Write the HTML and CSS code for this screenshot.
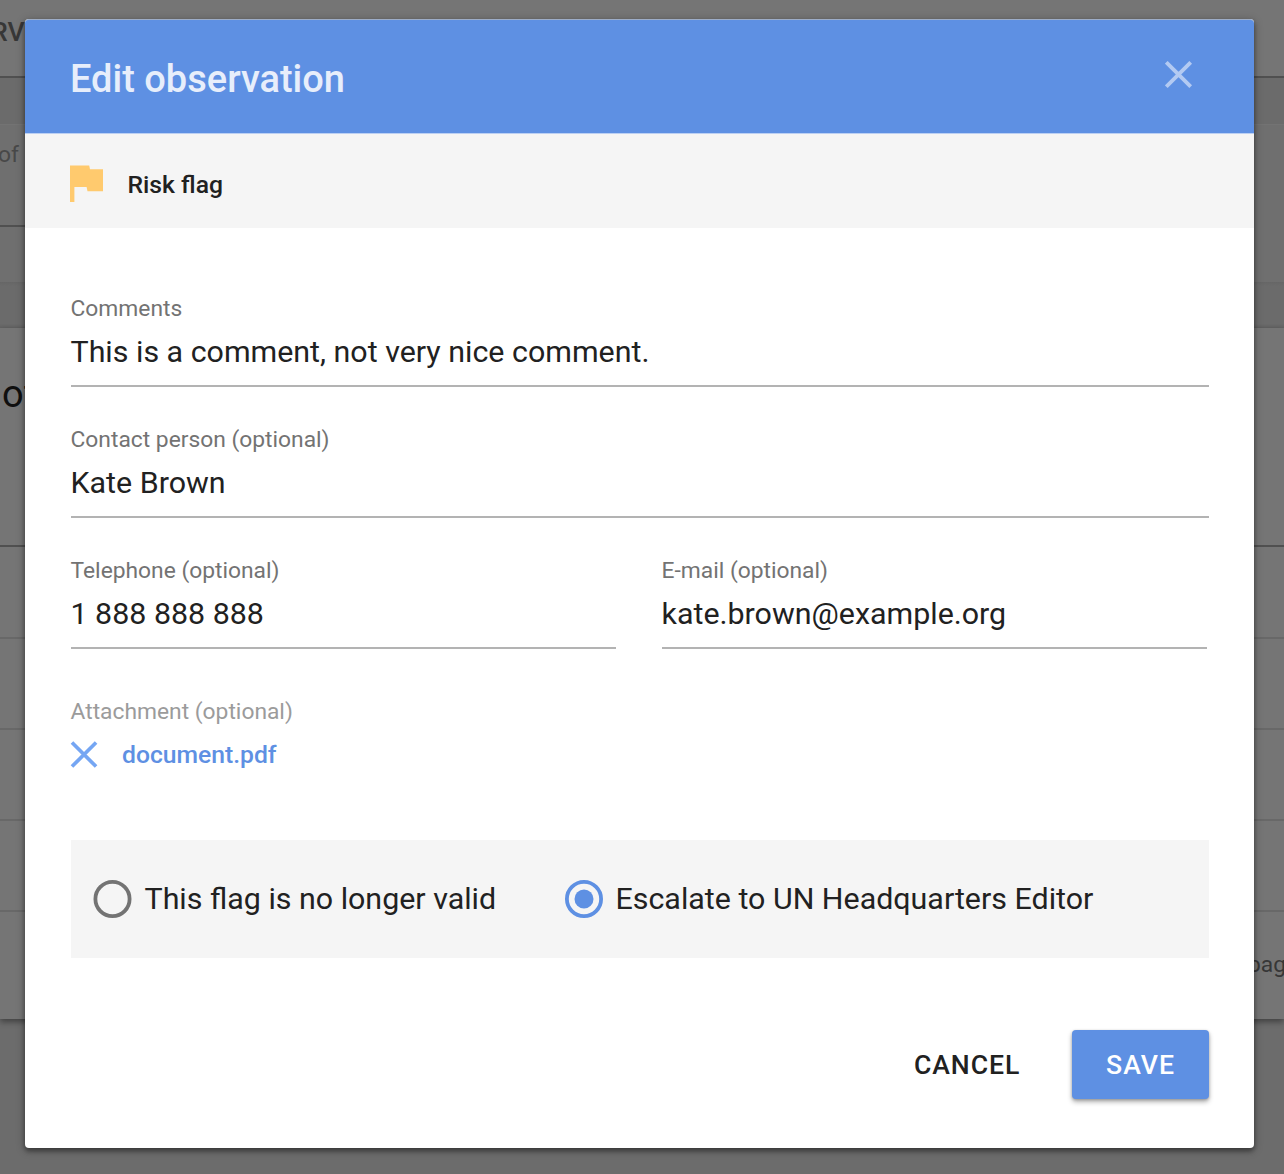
FILE: index.html
```html
<!DOCTYPE html>
<html lang="en">
<head>
<meta charset="utf-8">
<title>Edit observation</title>
<link rel="stylesheet" href="styles.css">
</head>
<body>
<div class="page" aria-hidden="true">
  <div class="page-tabs"><span class="tab-label">RV</span></div>
  <div class="page-gap"></div>
  <div class="page-filters"><div class="filter-field"><span>of</span></div></div>
  <div class="page-gap page-gap-lower"></div>
  <div class="page-table">
    <div class="table-head"><span class="table-title">of</span></div>
    <div class="table-row"></div>
    <div class="table-row"></div>
    <div class="table-row"></div>
    <div class="table-row"></div>
    <div class="table-foot"><span>pag</span></div>
  </div>
</div>

<div class="dialog" role="dialog" aria-labelledby="dialog-title">
  <header class="dialog-header">
    <h1 class="dialog-title" id="dialog-title">Edit observation</h1>
    <svg class="close-icon" viewBox="0 0 28 28"><path d="M1.3 1.3 25.7 25.7M25.7 1.3 1.3 25.7"/></svg>
  </header>
  <div class="flag-bar">
    <svg class="flag-icon" viewBox="0 0 33 37"><path d="M20 4.2 19.2.5H0V37H4.4V22H16.6L17.5 26.3H33V4.2Z"/></svg>
    <span class="flag-name">Risk flag</span>
  </div>
  <main class="dialog-body">
    <div class="field">
      <label class="field-label">Comments</label>
      <div class="field-value">This is a comment, not very nice comment.</div>
    </div>
    <div class="field">
      <label class="field-label">Contact person (optional)</label>
      <div class="field-value">Kate Brown</div>
    </div>
    <div class="field-pair">
      <div class="field">
        <label class="field-label">Telephone (optional)</label>
        <div class="field-value">1 888 888 888</div>
      </div>
      <div class="field">
        <label class="field-label">E-mail (optional)</label>
        <div class="field-value">kate.brown@example.org</div>
      </div>
    </div>
    <div class="attachment">
      <div class="field-label attachment-label">Attachment (optional)</div>
      <div class="attachment-file">
        <svg class="remove-icon" viewBox="0 0 28 28"><path d="M1 1.5 26 26.5M26 1.5 1 26.5"/></svg>
        <span class="file-name">document.pdf</span>
      </div>
    </div>
    <div class="options">
      <div class="option option-invalid">
        <svg class="radio" viewBox="0 0 38 38"><circle cx="18.5" cy="19" r="17.1"/></svg>
        <span>This flag is no longer valid</span>
      </div>
      <div class="option">
        <svg class="radio radio-checked" viewBox="0 0 38 38"><circle cx="19" cy="19" r="17.1"/><circle class="radio-dot" cx="19" cy="19" r="9.5"/></svg>
        <span>Escalate to UN Headquarters Editor</span>
      </div>
    </div>
  </main>
  <footer class="dialog-actions">
    <button class="button button-cancel">CANCEL</button>
    <button class="button button-save">SAVE</button>
  </footer>
</div>
</body>
</html>
```
FILE: styles.css
```css
* { box-sizing: border-box; }

body {
  margin: 0;
  width: 1284px;
  height: 1174px;
  overflow: hidden;
  position: relative;
  background: #6c6c6c;
  font-family: Roboto, sans-serif;
  color: #212121;
}

svg { display: block; flex: none; }

/* Dimmed page behind the dialog */
.page { display: flex; flex-direction: column; }
.page-tabs {
  height: 78px;
  padding-top: 16px;
  background: #757575;
  border-bottom: 2px solid #505050;
}
.tab-label {
  display: block;
  margin-left: -9px;
  font-size: 26.6px;
  line-height: 32px;
  font-weight: 500;
  color: #373737;
}
.page-gap { height: 46px; background: #6b6b6b; }
.page-filters {
  height: 158px;
  background: #6f6f6f;
  border-top: 1px solid #737373;
}
.filter-field {
  width: 600px;
  height: 102px;
  padding-top: 15px;
  font-size: 22.8px;
  line-height: 30px;
  color: #484848;
  border-bottom: 2px solid #505050;
}
.filter-field span { margin-left: -2px; }
.page-gap-lower {
  background: linear-gradient(#666, #6b6b6b 4px, #6b6b6b 42px, #636363);
}
.page-table {
  height: 690.5px;
  background: #757575;
  box-shadow: 0 3px 6px rgba(0, 0, 0, .4);
}
.table-head {
  height: 219.4px;
  padding: 41px 0 0 2px;
  border-bottom: 2px solid #505050;
}
.table-title {
  display: block;
  font-size: 38px;
  line-height: 50px;
  letter-spacing: -.5px;
  color: #0f0f0f;
}
.table-row { height: 91.2px; border-bottom: 2px solid #686868; }
.table-foot {
  padding: 38px 0 0 1248px;
  font-size: 22.8px;
  line-height: 30px;
  color: #373737;
}

/* Dialog */
.dialog {
  position: absolute;
  left: 25px;
  top: 19px;
  width: 1229px;
  height: 1129px;
  display: flex;
  flex-direction: column;
  background: #fff;
  border-radius: 4px;
  box-shadow: 0 4px 4px rgba(0, 0, 0, .16), 0 2px 10px rgba(0, 0, 0, .3), 0 2px 4px rgba(0, 0, 0, .2);
}
.dialog-header {
  height: 115px;
  padding: 4px 61.5px 0 45px;
  display: flex;
  justify-content: space-between;
  align-items: center;
  background: #5e90e3;
  border-top: 1px solid #9dadc8;
  border-bottom: 1px solid #bcd0f3;
  border-radius: 4px 4px 0 0;
}
.dialog-title {
  margin: 0;
  padding-top: 1px;
  font-size: 38px;
  line-height: 46px;
  font-weight: 500;
  color: #e7eefb;
}
.close-icon { width: 28px; height: 28px; margin-top: -8px; }
.close-icon path { stroke: #b3caf2; stroke-width: 3.8; }
.flag-bar {
  height: 94px;
  padding: 5px 45px 0;
  display: flex;
  align-items: center;
  gap: 24.5px;
  background: #f5f5f5;
}
.flag-icon { width: 33px; height: 37px; }
.flag-icon path { fill: #ffca6e; }
.flag-name { font-size: 24.7px; line-height: 32px; font-weight: 500; padding-top: 2px; }

.dialog-body { padding: 66px 45px 0 45.5px; }
.field { height: 131px; }
.field-label {
  display: block;
  font-size: 22.8px;
  line-height: 30px;
  color: #737373;
}
.field-value {
  height: 63px;
  padding-top: 9px;
  font-size: 30.4px;
  line-height: 38px;
  border-bottom: 2px solid #b3b3b3;
}
.field-pair {
  display: grid;
  grid-template-columns: 545px 545px;
  column-gap: 46px;
}
.attachment { height: 153px; padding-top: 10px; }
.attachment-label { color: #9b9b9b; }
.attachment-file {
  height: 54px;
  display: flex;
  align-items: center;
  gap: 24.5px;
}
.remove-icon { width: 27px; height: 27px; overflow: visible; }
.remove-icon path { stroke: #75a6f3; stroke-width: 3.8; }
.file-name { font-size: 24.7px; font-weight: 500; color: #5e90e3; }

.options {
  height: 118px;
  padding-left: 23px;
  display: flex;
  align-items: center;
  background: #f5f5f5;
  font-size: 30.4px;
  line-height: 38px;
}
.option { display: flex; align-items: center; gap: 13px; }
.option-invalid { width: 471px; }
.radio {
  width: 38px;
  height: 38px;
  overflow: visible;
  fill: none;
  stroke: #737373;
  stroke-width: 3.8;
}
.radio-checked { stroke: #5e90e3; }
.radio-dot { fill: #5e90e3; stroke: none; }

.dialog-actions {
  display: flex;
  justify-content: flex-end;
  gap: 51.5px;
  padding: 72px 45px 0;
}
.button {
  height: 69px;
  padding: 0;
  border: 0;
  background: none;
  font: 500 26.6px/69px Roboto, sans-serif;
  letter-spacing: 1px;
  color: #212121;
}
.button-save {
  width: 137px;
  color: #fff;
  background: #5e90e3;
  border-radius: 4px;
  box-shadow: 0 3px 5px rgba(0, 0, 0, .3), 0 1px 3px rgba(0, 0, 0, .2);
}
```
